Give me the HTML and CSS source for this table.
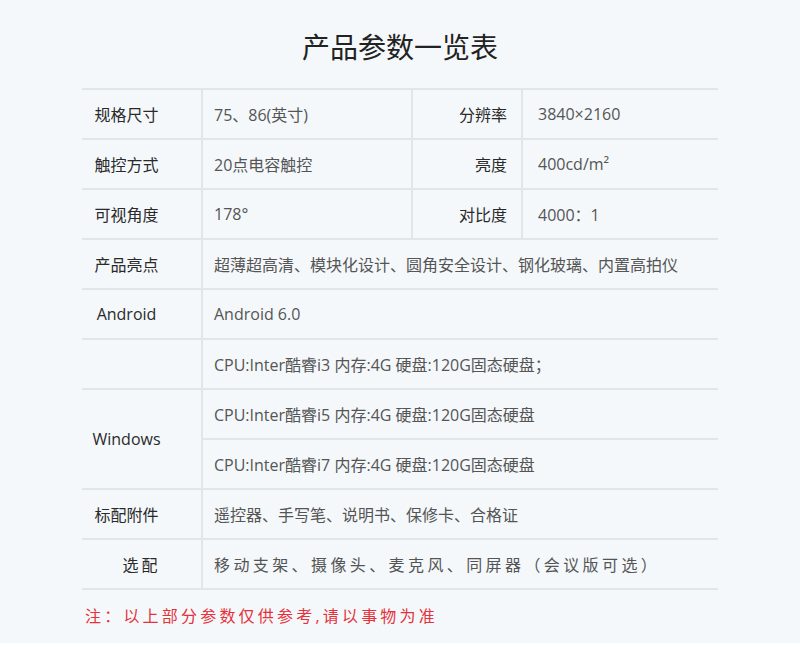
FILE: index.html
```html
<!DOCTYPE html>
<html>
<head>
<meta charset="utf-8">
<link rel="stylesheet" href="styles.css">
</head>
<body>

<div class="page">
  <h1 class="title">产品参数一览表</h1>

  <div class="specs">
    <div class="cell label">规格尺寸</div>
    <div class="cell value">75、86(英寸)</div>
    <div class="cell label-right">分辨率</div>
    <div class="cell value-right">3840×2160</div>

    <div class="cell label">触控方式</div>
    <div class="cell value">20点电容触控</div>
    <div class="cell label-right">亮度</div>
    <div class="cell value-right">400cd/m²</div>

    <div class="cell label">可视角度</div>
    <div class="cell value">178°</div>
    <div class="cell label-right">对比度</div>
    <div class="cell value-right">4000：1</div>

    <div class="cell label">产品亮点</div>
    <div class="cell value wide">超薄超高清、模块化设计、圆角安全设计、钢化玻璃、内置高拍仪</div>

    <div class="cell label">Android</div>
    <div class="cell value wide">Android 6.0</div>

    <div class="cell label"></div>
    <div class="cell value wide">CPU:Inter酷睿i3 内存:4G 硬盘:120G固态硬盘；</div>

    <div class="cell label tall">Windows</div>
    <div class="cell value wide">CPU:Inter酷睿i5 内存:4G 硬盘:120G固态硬盘</div>
    <div class="cell value wide">CPU:Inter酷睿i7 内存:4G 硬盘:120G固态硬盘</div>

    <div class="cell label">标配附件</div>
    <div class="cell value wide">遥控器、手写笔、说明书、保修卡、合格证</div>

    <div class="cell label label-spaced">选配</div>
    <div class="cell value wide spaced">移动支架、摄像头、麦克风、同屏器（会议版可选）</div>
  </div>

  <p class="note">注：以上部分参数仅供参考,请以事物为准</p>
</div>

</body>
</html>
```

FILE: styles.css
```css
/* 产品参数表 */

body {
  margin: 0;
  background: #fff;
  font-family: "Open Sans", "Noto Sans CJK SC", sans-serif;
}

.page {
  height: 643px;
  background: #f4f8fb;
  padding-top: 27px;
  box-sizing: border-box;
}

.title {
  margin: 0 0 21px;
  font-size: 28px;
  line-height: 40px;
  font-weight: normal;
  text-align: center;
  color: #222;
}

/* 表格用 grid，格线靠 gap 露出底色 */
.specs {
  margin: 0 82px;
  display: grid;
  grid-template-columns: 119px 208px 108px 195px;
  grid-auto-rows: 48px;
  gap: 2px;
  background: #e2e6ea;
  border-top: 2px solid #e2e6ea;
  border-bottom: 2px solid #e2e6ea;
}

.cell {
  background: #f4f8fb;
  display: flex;
  align-items: center;
  font-size: 16px;
  white-space: nowrap;
}

.label {
  justify-content: center;
  padding-right: 30px;
  color: #2a2a2a;
}

.label-spaced {
  padding-right: 0;
  letter-spacing: 3px;
}

.label-right {
  justify-content: flex-end;
  padding-right: 14px;
  color: #2a2a2a;
}

.value {
  padding-left: 11px;
  color: #555;
}

.value-right {
  padding-left: 15px;
  color: #555;
}

.wide {
  grid-column: span 3;
}

.tall {
  grid-row: span 2;
}

.spaced {
  letter-spacing: 3.4px;
}

.note {
  margin: 14px 0 0 85px;
  font-size: 16px;
  line-height: 24px;
  letter-spacing: 3.2px;
  color: #e5323a;
}
```
